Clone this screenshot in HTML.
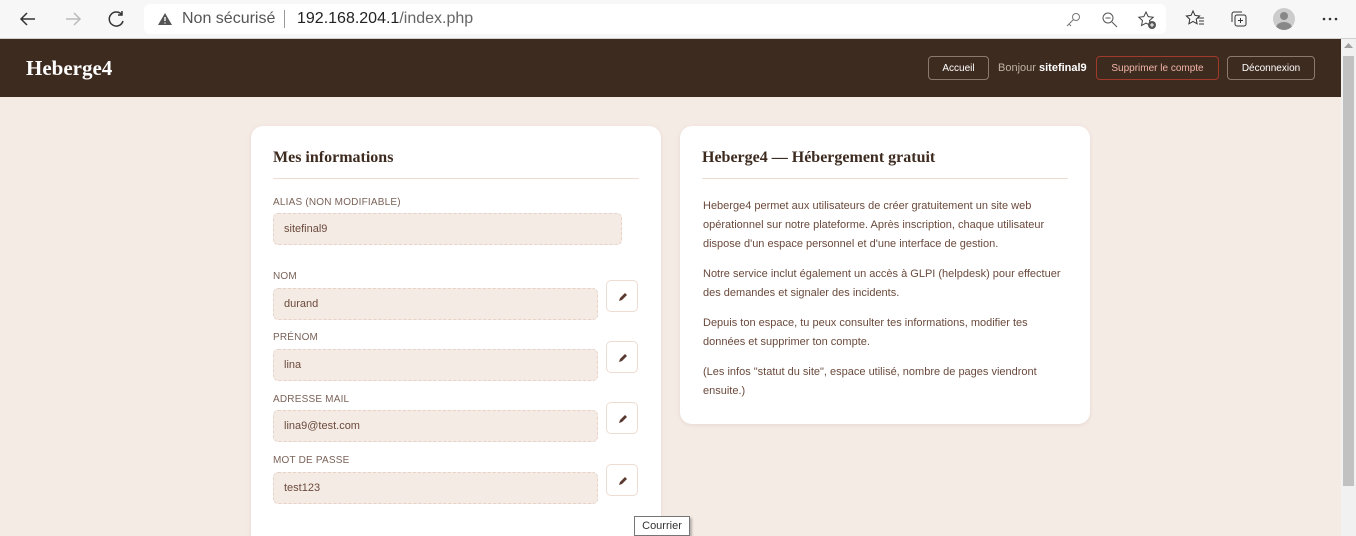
<!DOCTYPE html>
<html style="overflow:hidden;width:1356px;height:536px"><head><meta charset="utf-8"><style>
*{box-sizing:border-box;margin:0;padding:0}
body{width:1356px;height:536px;overflow:hidden;background:#f5ebe5;font-family:"Liberation Sans",sans-serif;position:relative}
.chrome{position:absolute;left:0;top:0;width:1356px;height:39px;background:#f7f7f7;border-bottom:1px solid #d0d0d0}
.url{position:absolute;left:144px;top:4px;width:1022px;height:30px;background:#fff;border-radius:6px}
.hdr{position:absolute;left:0;top:39px;width:1341px;height:58px;background:#3e2b20}
.logo{position:absolute;left:26px;top:56px;color:#fff;font:bold 21px "Liberation Serif",serif}
.btn{position:absolute;top:56px;height:24px;border:1px solid #8a7a6e;border-radius:4px;color:#fff;font-size:10px;line-height:23px;text-align:center}
.sb{position:absolute;left:1341px;top:39px;width:15px;height:497px;background:#f1f1f1}
.card{position:absolute;background:#fff;border-radius:12px;box-shadow:0 1px 4px rgba(120,80,60,.12)}
.card h2{position:absolute;left:22px;top:23px;font:bold 16px "Liberation Serif",serif;color:#3e2b20}
.card .hr{position:absolute;left:22px;right:22px;top:52px;height:1px;background:#ecdcd2}
.lab{position:absolute;left:273px;font-size:10px;color:#7a6258;letter-spacing:.2px}
.inp{position:absolute;left:273px;height:32px;background:#f5ebe5;border:1px dashed #e5d3c8;border-radius:5px;font-size:11px;color:#6a4a3c;padding-left:10px;line-height:30px}
.ed{position:absolute;left:606px;width:32px;height:32px;border:1px solid #ecdcd2;border-radius:5px;background:#fff}
.ed svg{position:absolute;left:10px;top:10px}
.p{position:absolute;left:703px;width:364px;font-size:11px;line-height:19px;color:#6a4a3c}
</style></head><body>
<div class="chrome">
<svg style="position:absolute;left:18px;top:10px" width="20" height="18"><path d="M17 9H3M9 3L3 9l6 6" stroke="#333" stroke-width="1.5" fill="none"/></svg>
<svg style="position:absolute;left:63px;top:10px" width="20" height="18"><path d="M3 9h14M11 3l6 6-6 6" stroke="#bbb" stroke-width="1.5" fill="none"/></svg>
<svg style="position:absolute;left:107px;top:9px" width="20" height="20"><path d="M15 6A7 7 0 1 0 16 12M15 2v4h-4" stroke="#333" stroke-width="1.5" fill="none"/></svg>
<div class="url">
<svg style="position:absolute;left:13px;top:8px" width="16" height="14"><path d="M8 1L15 13H1Z" fill="#555"/><path d="M8 5v4M8 10.5v1" stroke="#fff" stroke-width="1.4"/></svg>
<span style="position:absolute;left:38px;top:6px;font-size:16px;color:#555">Non sécurisé</span>
<span style="position:absolute;left:140px;top:6px;width:1px;height:18px;background:#999"></span>
<span style="position:absolute;left:153px;top:6px;font-size:16px;color:#222">192.168.204.1<span style="color:#666">/index.php</span></span>
<svg style="position:absolute;left:920px;top:7px" width="18" height="18"><circle cx="12" cy="6" r="3.5" stroke="#777" fill="none"/><path d="M9.5 8.5L3 15M5 13l2 2" stroke="#777" fill="none"/></svg>
<svg style="position:absolute;left:957px;top:7px" width="18" height="18"><circle cx="7" cy="7" r="5" stroke="#555" fill="none"/><path d="M11 11l5 5M4.5 7h5" stroke="#555"/></svg>
<svg style="position:absolute;left:993px;top:6px" width="20" height="20"><path d="M9 2l2.2 4.6 5 .6-3.7 3.4 1 5-4.5-2.5-4.5 2.5 1-5L1.8 7.2l5-.6Z" stroke="#444" fill="none"/><circle cx="15" cy="15" r="4" fill="#555"/><path d="M15 13v4M13 15h4" stroke="#fff"/></svg>
</div>
<svg style="position:absolute;left:1185px;top:9px" width="20" height="20"><path d="M8 2l2 4.4 4.6.6-3.4 3.2.9 4.6L8 12.5 3.9 14.8l.9-4.6L1.4 7l4.6-.6Z" stroke="#333" fill="none"/><path d="M13 9h6M14 12h5M14 15h5" stroke="#333"/></svg>
<svg style="position:absolute;left:1229px;top:9px" width="20" height="20"><rect x="6" y="6" width="11" height="11" rx="2" stroke="#333" fill="none"/><path d="M3 13V5a2 2 0 0 1 2-2h8M11.5 9v5M9 11.5h5" stroke="#333" fill="none"/></svg>
<div style="position:absolute;left:1273px;top:8px;width:22px;height:22px;border-radius:50%;background:#ccc;overflow:hidden"><div style="position:absolute;left:7px;top:4px;width:8px;height:8px;border-radius:50%;background:#888"></div><div style="position:absolute;left:3px;top:14px;width:16px;height:12px;border-radius:50%;background:#888"></div></div>
<svg style="position:absolute;left:1322px;top:17px" width="16" height="4"><circle cx="2" cy="2" r="1.3" fill="#333"/><circle cx="8" cy="2" r="1.3" fill="#333"/><circle cx="14" cy="2" r="1.3" fill="#333"/></svg>
</div>
<div class="hdr"></div>
<div class="logo">Heberge4</div>
<div class="btn" style="left:928px;width:61px">Accueil</div>
<span style="position:absolute;left:998px;top:62px;font-size:11px;color:#bfb1a6">Bonjour <b style="color:#fff">sitefinal9</b></span>
<div class="btn" style="left:1096px;width:123px;border-color:#a03a2a;color:#f0b5a8">Supprimer le compte</div>
<div class="btn" style="left:1227px;width:88px">Déconnexion</div>
<div class="sb"><svg style="position:absolute;left:3px;top:4px" width="9" height="6"><path d="M0 5L4.5 0 9 5Z" fill="#a0a0a0"/></svg><div style="position:absolute;left:2px;top:17px;width:11px;height:430px;background:#c1c1c1"></div></div>

<div class="card" style="left:251px;top:126px;width:410px;height:420px"><h2>Mes informations</h2><div class="hr"></div></div>
<div class="card" style="left:680px;top:126px;width:410px;height:298px"><h2>Heberge4 — Hébergement gratuit</h2><div class="hr"></div></div>

<div class="lab" style="top:197px">ALIAS (NON MODIFIABLE)</div>
<div class="inp" style="top:213px;width:349px">sitefinal9</div>
<div class="lab" style="top:271px">NOM</div>
<div class="inp" style="top:288px;width:325px">durand</div>
<div class="ed" style="top:280px"><svg width="12" height="12"><path d="M2 10l1-3 5-5 2 2-5 5z" fill="#5a3a30"/></svg></div>
<div class="lab" style="top:332px">PRÉNOM</div>
<div class="inp" style="top:349px;width:325px">lina</div>
<div class="ed" style="top:341px"><svg width="12" height="12"><path d="M2 10l1-3 5-5 2 2-5 5z" fill="#5a3a30"/></svg></div>
<div class="lab" style="top:394px">ADRESSE MAIL</div>
<div class="inp" style="top:410px;width:325px">lina9@test.com</div>
<div class="ed" style="top:402px"><svg width="12" height="12"><path d="M2 10l1-3 5-5 2 2-5 5z" fill="#5a3a30"/></svg></div>
<div class="lab" style="top:455px">MOT DE PASSE</div>
<div class="inp" style="top:472px;width:325px">test123</div>
<div class="ed" style="top:464px"><svg width="12" height="12"><path d="M2 10l1-3 5-5 2 2-5 5z" fill="#5a3a30"/></svg></div>

<div class="p" style="top:197px">Heberge4 permet aux utilisateurs de créer gratuitement un site web opérationnel sur notre plateforme. Après inscription, chaque utilisateur dispose d'un espace personnel et d'une interface de gestion.</div>
<div class="p" style="top:265px">Notre service inclut également un accès à GLPI (helpdesk) pour effectuer des demandes et signaler des incidents.</div>
<div class="p" style="top:314px">Depuis ton espace, tu peux consulter tes informations, modifier tes données et supprimer ton compte.</div>
<div class="p" style="top:363px">(Les infos "statut du site", espace utilisé, nombre de pages viendront ensuite.)</div>

<div style="position:absolute;left:634px;top:516px;width:56px;height:20px;background:#fff;border:1px solid #767676;font-size:11px;color:#333;line-height:18px;text-align:center;box-shadow:2px 2px 2px rgba(0,0,0,.25)">Courrier</div>
</body></html>
